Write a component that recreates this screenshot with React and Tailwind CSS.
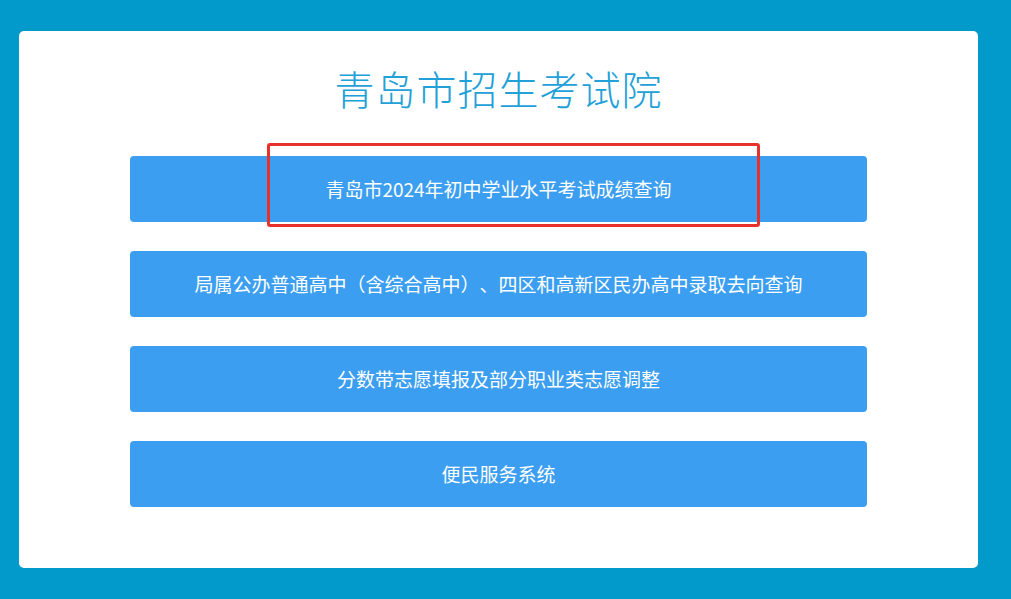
import React from 'react';

const links = [
    '青岛市2024年初中学业水平考试成绩查询',
    '局属公办普通高中（含综合高中）、四区和高新区民办高中录取去向查询',
    '分数带志愿填报及部分职业类志愿调整',
    '便民服务系统',
];

const App = () => {
    return (
        <div
            className="w-[1011px] h-[599px] bg-[#0299cb] pt-[31px] pl-[19px] pr-[33px] pb-[31px] [text-spacing-trim:space-all]"
            style={{ fontFamily: '"Microsoft YaHei", "Noto Sans CJK SC", "Noto Sans", sans-serif' }}
        >
            <div className="relative h-full bg-white rounded-[5px] px-[111px] pt-[35px]">
                <h1 className="text-center text-[40px] leading-[44px] font-light text-[#22a0d8] tracking-[1px]">
                    青岛市招生考试院
                </h1>

                <div className="mt-[46px] flex flex-col gap-[29px]">
                    {links.map((label) => (
                        <a
                            key={label}
                            href="#"
                            className="h-[66px] flex items-center justify-center bg-[#3b9ef0] rounded-[4px] text-white text-[19px]"
                        >
                            {label}
                        </a>
                    ))}
                </div>

                {/* annotation box */}
                <div className="absolute left-[248px] top-[112px] w-[493px] h-[84px] border-[3px] border-[#e8312b] rounded-[3px]" />
            </div>
        </div>
    );
};

export default App;
